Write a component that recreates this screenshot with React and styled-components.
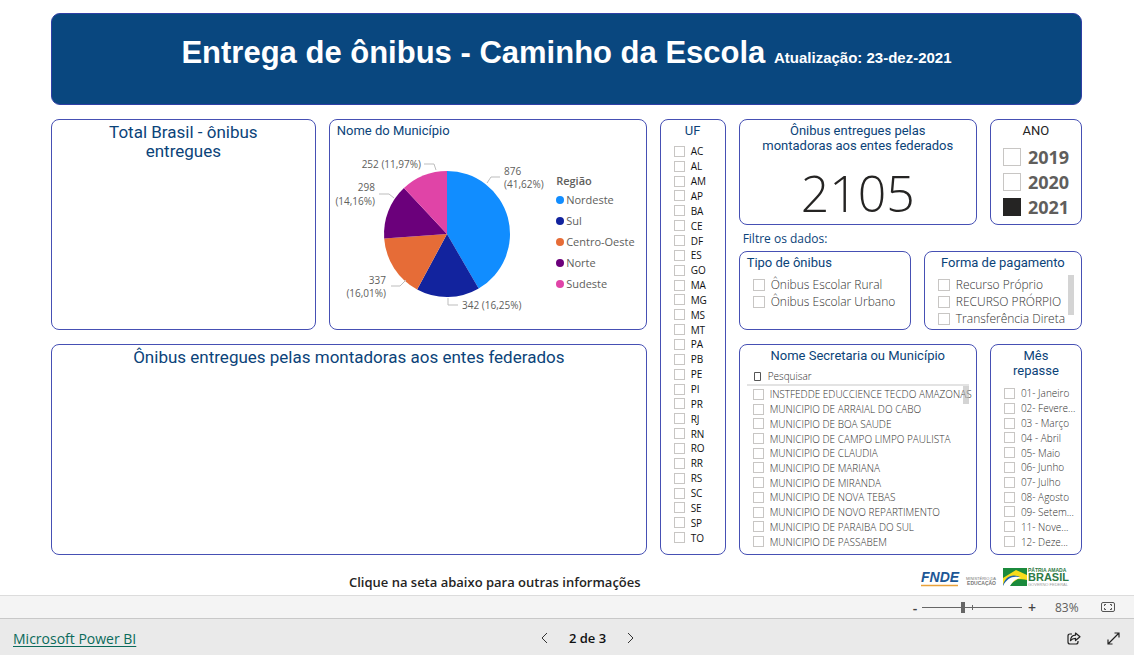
import React from "react";
import styled, { createGlobalStyle } from "styled-components";

const regions = [
  { name: "Nordeste", value: 876, color: "#118dff" },
  { name: "Sul", value: 342, color: "#12239e" },
  { name: "Centro-Oeste", value: 337, color: "#e66c37" },
  { name: "Norte", value: 298, color: "#6b007b" },
  { name: "Sudeste", value: 252, color: "#e044a7" },
];

const states = [
  "AC", "AL", "AM", "AP", "BA", "CE", "DF", "ES", "GO",
  "MA", "MG", "MS", "MT", "PA", "PB", "PE", "PI", "PR",
  "RJ", "RN", "RO", "RR", "RS", "SC", "SE", "SP", "TO",
];

const cities = [
  "INSTFEDDE EDUCCIENCE TECDO AMAZONAS",
  "MUNICIPIO DE ARRAIAL DO CABO",
  "MUNICIPIO DE BOA SAUDE",
  "MUNICIPIO DE CAMPO LIMPO PAULISTA",
  "MUNICIPIO DE CLAUDIA",
  "MUNICIPIO DE MARIANA",
  "MUNICIPIO DE MIRANDA",
  "MUNICIPIO DE NOVA TEBAS",
  "MUNICIPIO DE NOVO REPARTIMENTO",
  "MUNICIPIO DE PARAIBA DO SUL",
  "MUNICIPIO DE PASSABEM",
];

const months = [
  "01- Janeiro", "02- Fevere...", "03 - Março", "04 - Abril",
  "05- Maio", "06- Junho", "07- Julho", "08- Agosto",
  "09- Setem...", "11- Nove...", "12- Deze...",
];

function CheckList({ items, ...style }) {
  return (
    <List {...style}>
      {items.map((item) => (
        <Option key={item} {...style}>
          <Check type="checkbox" $size={style.$box} />
          <OptionText>{item}</OptionText>
        </Option>
      ))}
    </List>
  );
}

function Pie() {
  const total = regions.reduce((sum, r) => sum + r.value, 0);
  const cx = 110;
  const cy = 84;
  const r = 63;
  let start = 0;
  const point = (a) => `${cx + r * Math.sin(a)} ${cy - r * Math.cos(a)}`;

  return (
    <PieSvg viewBox="0 0 208 168" role="img" aria-label="Nome do Município">
      {regions.map(({ name, value, color }) => {
        const end = start + (value / total) * Math.PI * 2;
        const d = `M${cx} ${cy} L${point(start)} A${r} ${r} 0 0 1 ${point(end)} Z`;
        start = end;
        return <path key={name} d={d} fill={color} />;
      })}
      <g fill="none" stroke="#bdbdbd">
        <path d="M150 33l4-6h9" />
        <path d="M111 148v7h10" />
        <path d="M54 136h9l6-6" />
        <path d="M42 44h10l5 4" />
        <path d="M87 14h10l2 6" />
      </g>
      <g fill="#605e5c">
        <text x="167" y="25">876</text>
        <text x="167" y="38">(41,62%)</text>
        <text x="125" y="159">342 (16,25%)</text>
        <text x="49" y="134" textAnchor="end">337</text>
        <text x="49" y="147" textAnchor="end">(16,01%)</text>
        <text x="38" y="41" textAnchor="end">298</text>
        <text x="38" y="55" textAnchor="end">(14,16%)</text>
        <text x="84" y="18" textAnchor="end">252 (11,97%)</text>
      </g>
    </PieSvg>
  );
}

function Logos() {
  return (
    <LogoSvg viewBox="0 0 148 20" role="img" aria-label="FNDE, Ministério da Educação, Governo Federal">
      <text x="0" y="15" fontSize="14" fontWeight="700" fontStyle="italic" fill="#1c5796">FNDE</text>
      <path d="M0 18.5h37" stroke="#e9a23b" strokeWidth="1.6" />
      <g fill="#777" fontSize="4" textAnchor="end">
        <text x="75" y="13">MINISTÉRIO DA</text>
        <text x="75" y="18" fontSize="5" fontWeight="700">EDUCAÇÃO</text>
      </g>
      <path d="M82 1h24v18H82z" fill="#1b8a3c" />
      <path d="M82 11L95 3l11 5v6l-9-2-11 7h-4z" fill="#f8dc1c" />
      <path d="M82 18C84 10 91 6 99 10c-6 0-9 3-12 9h-5z" fill="#1b62ad" />
      <path d="M82 19c4-8 11-11 18-8-6 1-8 3-11 8z" fill="#fff" />
      <path d="M90 19c3-6 9-8 16-6v6z" fill="#1b8a3c" />
      <g fill="#2d7a45">
        <text x="107" y="5" fontSize="5" fontWeight="700">PÁTRIA AMADA</text>
        <text x="107" y="14" fontSize="11" fontWeight="700">BRASIL</text>
        <text x="107" y="19" fontSize="4" fill="#999">GOVERNO FEDERAL</text>
      </g>
    </LogoSvg>
  );
}

export default function App() {
  return (
    <Page>
      <GlobalStyle />
      <Report>
        <Banner>
          <BannerTitle>
            Entrega de ônibus - Caminho da Escola{" "}
            <BannerDate>Atualização: 23-dez-2021</BannerDate>
          </BannerTitle>
        </Banner>

        <Board>
          <Stack>
            <Split $columns="264fr 317fr">
              <Card>
                <BigTitle $narrow>Total Brasil - ônibus entregues</BigTitle>
              </Card>
              <Card>
                <Title $left>Nome do Município</Title>
                <ChartArea>
                  <Pie />
                  <Legend>
                    <LegendTitle>Região</LegendTitle>
                    {regions.map(({ name, color }) => (
                      <LegendItem key={name}>
                        <Dot $color={color} />
                        {name}
                      </LegendItem>
                    ))}
                  </Legend>
                </ChartArea>
              </Card>
            </Split>
            <Card>
              <BigTitle>Ônibus entregues pelas montadoras aos entes federados</BigTitle>
            </Card>
          </Stack>

          <Card>
            <Title>UF</Title>
            <CheckList items={states} $box={11} $dark $pad="6px 0 9px 13px" />
          </Card>

          <Stack>
            <Filters>
              <Split $columns="238fr 92fr">
                <Card>
                  <Title $narrow>Ônibus entregues pelas montadoras aos entes federados</Title>
                  <Total>2105</Total>
                </Card>
                <Card>
                  <Title $dark>ANO</Title>
                  <Years>
                    {["2019", "2020", "2021"].map((year) => (
                      <Year key={year}>
                        <Check type="checkbox" $size={18} defaultChecked={year === "2021"} />
                        {year}
                      </Year>
                    ))}
                  </Years>
                </Card>
              </Split>
              <Hint>Filtre os dados:</Hint>
              <Split $columns="172fr 158fr">
                <Card>
                  <Title $left>Tipo de ônibus</Title>
                  <CheckList
                    items={["Ônibus Escolar Rural", "Ônibus Escolar Urbano"]}
                    $box={12}
                    $font={12}
                    $row={17}
                    $light
                    $pad="6px 0 0 13px"
                  />
                </Card>
                <Card>
                  <Title>Forma de pagamento</Title>
                  <CheckList
                    items={["Recurso Próprio", "RECURSO PRÓRPIO", "Transferência Direta"]}
                    $box={12}
                    $font={12}
                    $row={17}
                    $light
                    $pad="6px 0 0 13px"
                  />
                  <Thumb $top={23} $height={40} />
                </Card>
              </Split>
            </Filters>

            <Split $columns="238fr 92fr">
              <Card>
                <Title>Nome Secretaria ou Município</Title>
                <Search>
                  <SearchGlyph viewBox="0 0 7 9" aria-hidden="true">
                    <path d="M.5.5h6v8h-6z" fill="none" stroke="#555" />
                  </SearchGlyph>
                  <SearchInput placeholder="Pesquisar" aria-label="Pesquisar" />
                </Search>
                <CheckList items={cities} $box={11} $light $pad="1px 0 5px 13px" />
                <Thumb $top={41} $height={18} />
              </Card>
              <Card>
                <Title $narrow>Mês repasse</Title>
                <CheckList items={months} $box={11} $light $pad="8px 0 5px 13px" />
              </Card>
            </Split>
          </Stack>
        </Board>

        <Closing>
          <Notice>Clique na seta abaixo para outras informações</Notice>
          <Logos />
        </Closing>
      </Report>

      <ZoomBar>
        <ZoomButton aria-label="Reduzir">-</ZoomButton>
        <SliderBox>
          <Slider type="range" min="0" max="100" defaultValue="41" aria-label="Zoom" />
        </SliderBox>
        <ZoomButton aria-label="Ampliar">+</ZoomButton>
        <Percent>83%</Percent>
        <IconButton aria-label="Ajustar à página">
          <svg width="14" height="10" viewBox="0 0 14 10" fill="none" stroke="#555">
            <rect x=".5" y=".5" width="13" height="9" rx="1.5" />
            <path d="M3.5 4V2.500H5M9 2.500h1.500V4M10.500 6v1.500H9M5 7.500H3.500V6" />
          </svg>
        </IconButton>
      </ZoomBar>

      <StatusBar>
        <Brand href="#">Microsoft Power BI</Brand>
        <Pager>
          <IconButton aria-label="Página anterior">
            <svg width="7" height="12" viewBox="0 0 7 12" fill="none" stroke="#333">
              <path d="M6 1L1 6l5 5" />
            </svg>
          </IconButton>
          <PageCount>2 de 3</PageCount>
          <IconButton aria-label="Próxima página">
            <svg width="7" height="12" viewBox="0 0 7 12" fill="none" stroke="#333">
              <path d="M1 1l5 5-5 5" />
            </svg>
          </IconButton>
        </Pager>
        <Actions>
          <IconButton aria-label="Compartilhar">
            <svg width="14" height="13" viewBox="0 0 14 13" fill="none" stroke="#222" strokeWidth="1.2" strokeLinejoin="round">
              <path d="M5 2H3Q1 2 1 4v6q0 2 2 2h6q2 0 2-2V9" />
              <path d="M8.500 1L13 4.700 8.500 8.500V6.300C6.300 6.300 4.700 7 3.500 8.700 3.700 5.500 5.500 3.300 8.500 3.200z" />
            </svg>
          </IconButton>
          <IconButton aria-label="Tela inteira">
            <svg width="13" height="13" viewBox="0 0 13 13" fill="none" stroke="#222" strokeWidth="1.2">
              <path d="M1 12L12 1M7.500 1H12v4.500M1 7.500V12h4.500" />
            </svg>
          </IconButton>
        </Actions>
      </StatusBar>
    </Page>
  );
}

const GlobalStyle = createGlobalStyle`
  * {
    box-sizing: border-box;
  }
  body {
    margin: 0;
    background: #fff;
    font-family: "Open Sans", "Noto Sans", sans-serif;
  }
`;

const Page = styled.div`
  min-height: 100vh;
  display: flex;
  flex-direction: column;
`;

const Report = styled.main`
  flex: 1;
  padding: 13px 52px 0 51px;
`;

const Banner = styled.header`
  padding: 21px 20px 33px;
  border: 1px solid #2f3fa5;
  border-radius: 9px;
  background: #09477f;
  text-align: center;
`;

const BannerTitle = styled.h1`
  margin: 0;
  color: #fff;
  font-family: "Liberation Sans", Arial, sans-serif;
  font-size: 31px;
  line-height: 36px;
`;

const BannerDate = styled.span`
  font-size: 15px;
  line-height: 15px;
`;

const Board = styled.div`
  display: grid;
  grid-template-columns: 595fr 66px 343fr;
  gap: 13px;
  margin-top: 14px;
`;

const Stack = styled.div`
  display: grid;
  grid-template-rows: repeat(2, minmax(211px, auto));
  gap: 14px;
  min-width: 0;
`;

const Split = styled.div`
  display: grid;
  grid-template-columns: ${(p) => p.$columns};
  gap: 13px;
  min-width: 0;
`;

const Filters = styled.div`
  display: grid;
  grid-template-rows: 106px auto 79px;
`;

const Card = styled.section`
  position: relative;
  display: flex;
  flex-direction: column;
  min-width: 0;
  min-height: 0;
  padding: 3px 7px 0;
  border: 1px solid #4650b4;
  border-radius: 8px;
`;

const Title = styled.h2`
  margin: 0;
  padding: ${(p) => (p.$narrow ? "0 12px" : "0")};
  color: ${(p) => (p.$dark ? "#252423" : "#0b4379")};
  font-family: Roboto, sans-serif;
  font-size: 13px;
  font-weight: 400;
  line-height: 15px;
  text-align: ${(p) => (p.$left ? "left" : "center")};
`;

const BigTitle = styled(Title)`
  padding: ${(p) => (p.$narrow ? "0 40px" : "0")};
  font-size: 17px;
  line-height: 19px;
`;

const ChartArea = styled.div`
  display: flex;
  align-items: flex-start;
  justify-content: space-between;
  padding: 12px 4px 0 0;
`;

const PieSvg = styled.svg`
  flex: none;
  width: 208px;
  height: 168px;
  overflow: visible;
  font-size: 10px;
`;

const Legend = styled.ul`
  margin: 0;
  padding: 23px 0 0;
  list-style: none;
  color: #605e5c;
`;

const LegendTitle = styled.li`
  font-size: 11px;
  font-weight: 600;
  line-height: 16px;
`;

const LegendItem = styled.li`
  display: flex;
  align-items: center;
  gap: 2px;
  height: 21px;
  font-size: 11px;
  white-space: nowrap;
`;

const Dot = styled.span`
  width: 8px;
  height: 8px;
  border-radius: 50%;
  background: ${(p) => p.$color};
`;

const List = styled.div`
  flex: ${(p) => (p.$row ? "none" : 1)};
  display: grid;
  grid-auto-rows: ${(p) => (p.$row ? `${p.$row}px` : "1fr")};
  min-width: 0;
  min-height: 0;
  padding: ${(p) => p.$pad};
  margin-left: -7px;
  margin-right: -7px;
`;

const Option = styled.label`
  display: flex;
  align-items: center;
  gap: 6px;
  min-width: 0;
  min-height: 0;
  color: ${(p) => (p.$dark ? "#111" : "#323130")};
  font-size: ${(p) => p.$font || 10}px;
  font-weight: ${(p) => (p.$light ? 300 : 400)};
  line-height: 14px;
`;

const OptionText = styled.span`
  white-space: nowrap;
`;

const Check = styled.input`
  appearance: none;
  flex: none;
  width: ${(p) => p.$size}px;
  height: ${(p) => p.$size}px;
  margin: 0;
  border: 1px solid #c8c6c4;
  background: #fff;

  &:checked {
    border-color: #252423;
    background: #252423;
  }
`;

const Total = styled.p`
  margin: 0;
  color: #252423;
  font-size: 50px;
  font-weight: 300;
  line-height: 80px;
  text-align: center;
`;

const Years = styled.div`
  padding: 6px 0 0 5px;
`;

const Year = styled.label`
  display: flex;
  align-items: center;
  gap: 7px;
  height: 25px;
  color: #605e5c;
  font-size: 18px;
  font-weight: 700;
`;

const Hint = styled.p`
  margin: 0;
  padding: 2px 4px 0;
  color: #0b4379;
  font-size: 12px;
  line-height: 24px;
`;

const Thumb = styled.span`
  position: absolute;
  top: ${(p) => p.$top}px;
  right: 7px;
  width: 6px;
  height: ${(p) => p.$height}px;
  background: rgba(170, 170, 170, 0.5);
`;

const Search = styled.div`
  display: flex;
  align-items: center;
  gap: 7px;
  height: 23px;
  padding: 5px 7px 0;
  border-bottom: 2px solid #e3e3e3;
`;

const SearchGlyph = styled.svg`
  flex: none;
  width: 7px;
  height: 9px;
`;

const SearchInput = styled.input`
  flex: 1;
  min-width: 0;
  padding: 0;
  border: 0;
  outline: 0;
  background: none;
  color: #323130;
  font: 300 10px "Open Sans", sans-serif;

  &::placeholder {
    color: #323130;
  }
`;

const Closing = styled.div`
  display: grid;
  grid-template-columns: 331fr 409fr;
  align-items: start;
  padding: 12px 13px 3px 27%;
`;

const Notice = styled.p`
  margin: 0;
  padding-top: 5px;
  color: #252423;
  font-size: 13px;
  font-weight: 600;
  line-height: 20px;
  text-align: center;
  white-space: nowrap;
`;

const LogoSvg = styled.svg`
  justify-self: end;
  width: 148px;
  height: 20px;
  overflow: visible;
  font-family: "Liberation Sans", Arial, sans-serif;
`;

const ZoomBar = styled.div`
  display: flex;
  align-items: center;
  justify-content: flex-end;
  height: 24px;
  padding-right: 19px;
  border-top: 1px solid #dcdcdc;
  border-bottom: 1px solid #c8c8c8;
  background: #f4f4f4;
`;

const ZoomButton = styled.button`
  width: 14px;
  padding: 0;
  border: 0;
  background: none;
  color: #444;
  font: 600 14px "Open Sans", sans-serif;
`;

const SliderBox = styled.div`
  position: relative;
  display: flex;
  width: 100px;
  margin-right: 3px;

  &::after {
    content: "";
    position: absolute;
    top: 3px;
    left: 50%;
    width: 1px;
    height: 5px;
    background: #666;
  }
`;

const Slider = styled.input`
  appearance: none;
  width: 100%;
  height: 11px;
  margin: 0;
  background: linear-gradient(#666, #666) center / 100% 1px no-repeat;

  &::-webkit-slider-thumb {
    appearance: none;
    width: 4px;
    height: 11px;
    background: #666;
  }
`;

const Percent = styled.span`
  width: 62px;
  padding-left: 16px;
  color: #605e5c;
  font-size: 12px;
`;

const IconButton = styled.button`
  display: flex;
  padding: 0;
  border: 0;
  background: none;
`;

const StatusBar = styled.footer`
  display: grid;
  grid-template-columns: 1fr auto 1fr;
  align-items: center;
  height: 36px;
  padding: 2px 14px 0 13px;
  background: #eaeaea;
`;

const Brand = styled.a`
  color: #0b6a5b;
  font-size: 14px;
  text-underline-offset: 2px;
`;

const Pager = styled.nav`
  display: flex;
  align-items: center;
  gap: 21px;
  margin-right: -42px;
`;

const PageCount = styled.span`
  color: #111;
  font-size: 13px;
  font-weight: 600;
`;

const Actions = styled.div`
  display: flex;
  align-items: center;
  justify-content: flex-end;
  gap: 26px;
`;
